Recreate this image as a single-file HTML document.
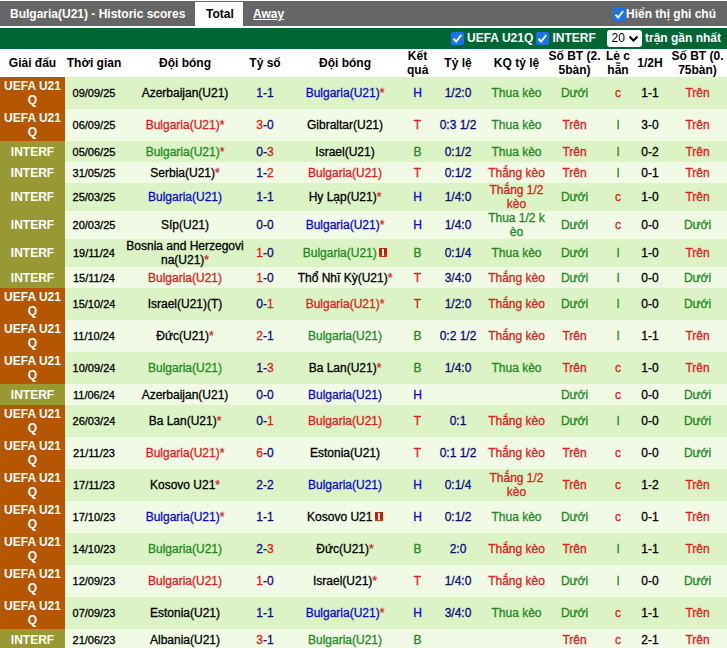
<!DOCTYPE html>
<html><head><meta charset="utf-8">
<style>
html,body{margin:0;padding:0;background:#fff;}
body{width:727px;height:648px;overflow:hidden;font-family:"Liberation Sans",Arial,sans-serif;font-size:12px;color:#000;position:relative;}
.top{position:absolute;left:0;top:1px;width:727px;height:25px;background:#666;}
.top .t{position:absolute;top:6px;color:#fff;font-weight:bold;font-size:12px;line-height:15px;white-space:nowrap;}
.top .tab{position:absolute;left:195px;top:1px;width:48px;height:26px;background:#fff;}
.cb{position:absolute;width:13px;height:13px;background:#1a73e8;border-radius:2px;}
.cb svg{position:absolute;left:0;top:0;}
.bar{position:absolute;left:0;top:28px;width:727px;height:21px;background:#006633;color:#fff;font-weight:bold;font-size:12px;line-height:15px;white-space:nowrap;}
.bar span{position:absolute;top:3px;}
.sel{position:absolute;left:607px;top:2px;width:35px;height:17px;background:#fff;border-radius:3px;color:#000;font-weight:normal;font-size:12px;line-height:17px;}
.sel span{top:0;}
table{position:absolute;left:0;top:49px;width:727px;border-collapse:collapse;table-layout:fixed;}
td,th{padding:0;text-align:center;line-height:14px;vertical-align:middle;white-space:normal;}
th{font-size:12px;font-weight:bold;line-height:14px;background:#fff;height:28px;}
th div{position:relative;top:0.4px;}
tr.a td{background:#dcf3c5;}
tr.b td{background:#f0fae5;}
td{-webkit-text-stroke:0.3px;}
td.lg{-webkit-text-stroke:0;color:#fff;font-weight:bold;font-size:12px;line-height:14px;}
tr td.lu{background:#b55700;}
tr td.li{background:#999933;}
.r{color:#e02020;}
.g{color:#1f8a1f;}
.bl{color:#0b0bc4;}
.k{color:#000;}
.dt{font-size:11px;}
.n{color:#0c0c7c;}
.sc{color:#0c0c7c;}
.od{color:#0c0c7c;}
.card{display:inline-block;width:8px;height:8.5px;background:linear-gradient(to bottom,#d02000,#c81800 50%,#e83808);margin-left:2.5px;position:relative;vertical-align:0.5px;}
.card b{position:absolute;left:3px;top:0.7px;width:2.2px;height:7.2px;background:#fff;}
</style></head><body>
<div class="top">
  <div class="t" style="left:10px">Bulgaria(U21) - Historic scores</div>
  <div class="tab"></div>
  <div class="t" style="left:206px;color:#000">Total</div>
  <div class="t" style="left:253px;text-decoration:underline">Away</div>
  <div class="cb" style="left:613px;top:7px"><svg width="13" height="13" viewBox="0 0 13 13"><path d="M2.5 6.7 L5.2 9.5 L10.2 3" fill="none" stroke="#fff" stroke-width="2"/></svg></div>
  <div class="t" style="left:626px">Hiển thị ghi chú</div>
</div>
<div class="bar">
  <div class="cb" style="left:451px;top:4px"><svg width="13" height="13" viewBox="0 0 13 13"><path d="M2.5 6.7 L5.2 9.5 L10.2 3" fill="none" stroke="#fff" stroke-width="2"/></svg></div>
  <span style="left:467px">UEFA U21Q</span>
  <div class="cb" style="left:536px;top:4px"><svg width="13" height="13" viewBox="0 0 13 13"><path d="M2.5 6.7 L5.2 9.5 L10.2 3" fill="none" stroke="#fff" stroke-width="2"/></svg></div>
  <span style="left:552.5px">INTERF</span>
  <div class="sel"><span style="left:4.5px">20</span><svg style="position:absolute;left:21px;top:5px" width="11" height="8" viewBox="0 0 11 8"><path d="M1.5 1.5 L5.5 5.5 L9.5 1.5" fill="none" stroke="#000" stroke-width="2"/></svg></div>
  <span style="left:645px">trận gần nhất</span>
</div>
<table>
<colgroup>
<col style="width:65px"><col style="width:58px"><col style="width:124px"><col style="width:36px"><col style="width:124px"><col style="width:21px"><col style="width:60px"><col style="width:57px"><col style="width:59px"><col style="width:28px"><col style="width:36px"><col style="width:59px">
</colgroup>
<tr><th><div>Giải đấu</div></th><th><div>Thời gian</div></th><th><div>Đội bóng</div></th><th><div>Tỷ số</div></th><th><div>Đội bóng</div></th><th><div>Kết quả</div></th><th><div>Tỷ lệ</div></th><th><div>KQ tỷ lệ</div></th><th><div>Số BT (2.<wbr>5bàn)</div></th><th><div>Lẻ c<wbr>hẵn</div></th><th><div>1/2H</div></th><th><div>Số BT (0.<wbr>75bàn)</div></th></tr>
<tr class="a" style="height:32px"><td class="lg lu">UEFA U21<wbr>Q</td><td class="dt">09/09/25</td><td><span class="k">Azerbaijan(U21)</span></td><td class="sc"><span class="n">1</span>-<span class="n">1</span></td><td><span class="bl">Bulgaria(U21)</span><span class="r">*</span></td><td class="bl">H</td><td class="od">1/2:0</td><td class="g">Thua kèo</td><td class="g">Dưới</td><td class="r">c</td><td>1-1</td><td class="r">Trên</td></tr>
<tr class="b" style="height:32px"><td class="lg lu">UEFA U21<wbr>Q</td><td class="dt">06/09/25</td><td><span class="r">Bulgaria(U21)</span><span class="r">*</span></td><td class="sc"><span class="r">3</span>-<span class="n">0</span></td><td><span class="k">Gibraltar(U21)</span></td><td class="r">T</td><td class="od">0:3 1/2</td><td class="g">Thua kèo</td><td class="r">Trên</td><td class="g">l</td><td>3-0</td><td class="r">Trên</td></tr>
<tr class="a" style="height:21px"><td class="lg li">INTERF</td><td class="dt">05/06/25</td><td><span class="g">Bulgaria(U21)</span><span class="r">*</span></td><td class="sc"><span class="n">0</span>-<span class="r">3</span></td><td><span class="k">Israel(U21)</span></td><td class="g">B</td><td class="od">0:1/2</td><td class="g">Thua kèo</td><td class="r">Trên</td><td class="g">l</td><td>0-2</td><td class="r">Trên</td></tr>
<tr class="b" style="height:21px"><td class="lg li">INTERF</td><td class="dt">31/05/25</td><td><span class="k">Serbia(U21)</span><span class="r">*</span></td><td class="sc"><span class="n">1</span>-<span class="r">2</span></td><td><span class="r">Bulgaria(U21)</span></td><td class="r">T</td><td class="od">0:1/2</td><td class="r">Thắng kèo</td><td class="r">Trên</td><td class="g">l</td><td>0-1</td><td class="r">Trên</td></tr>
<tr class="a" style="height:28px"><td class="lg li">INTERF</td><td class="dt">25/03/25</td><td><span class="bl">Bulgaria(U21)</span></td><td class="sc"><span class="n">1</span>-<span class="n">1</span></td><td><span class="k">Hy Lạp(U21)</span><span class="r">*</span></td><td class="bl">H</td><td class="od">1/4:0</td><td class="r">Thắng 1/2 kèo</td><td class="g">Dưới</td><td class="r">c</td><td>1-0</td><td class="r">Trên</td></tr>
<tr class="b" style="height:28px"><td class="lg li">INTERF</td><td class="dt">20/03/25</td><td><span class="k">Síp(U21)</span></td><td class="sc"><span class="n">0</span>-<span class="n">0</span></td><td><span class="bl">Bulgaria(U21)</span><span class="r">*</span></td><td class="bl">H</td><td class="od">1/4:0</td><td class="g">Thua 1/2 k<wbr>èo</td><td class="g">Dưới</td><td class="r">c</td><td>0-0</td><td class="g">Dưới</td></tr>
<tr class="a" style="height:28px"><td class="lg li">INTERF</td><td class="dt">19/11/24</td><td><span class="k">Bosnia and Herzegovi<wbr>na(U21)</span><span class="r">*</span></td><td class="sc"><span class="r">1</span>-<span class="n">0</span></td><td><span class="g">Bulgaria(U21)</span><i class="card"><b></b></i></td><td class="g">B</td><td class="od">0:1/4</td><td class="g">Thua kèo</td><td class="g">Dưới</td><td class="g">l</td><td>1-0</td><td class="r">Trên</td></tr>
<tr class="b" style="height:21px"><td class="lg li">INTERF</td><td class="dt">15/11/24</td><td><span class="r">Bulgaria(U21)</span></td><td class="sc"><span class="r">1</span>-<span class="n">0</span></td><td><span class="k">Thổ Nhĩ Kỳ(U21)</span><span class="r">*</span></td><td class="r">T</td><td class="od">3/4:0</td><td class="r">Thắng kèo</td><td class="g">Dưới</td><td class="g">l</td><td>0-0</td><td class="g">Dưới</td></tr>
<tr class="a" style="height:32px"><td class="lg lu">UEFA U21<wbr>Q</td><td class="dt">15/10/24</td><td><span class="k">Israel(U21)(T)</span></td><td class="sc"><span class="n">0</span>-<span class="r">1</span></td><td><span class="r">Bulgaria(U21)</span><span class="r">*</span></td><td class="r">T</td><td class="od">1/2:0</td><td class="r">Thắng kèo</td><td class="g">Dưới</td><td class="g">l</td><td>0-0</td><td class="g">Dưới</td></tr>
<tr class="b" style="height:32px"><td class="lg lu">UEFA U21<wbr>Q</td><td class="dt">11/10/24</td><td><span class="k">Đức(U21)</span><span class="r">*</span></td><td class="sc"><span class="r">2</span>-<span class="n">1</span></td><td><span class="g">Bulgaria(U21)</span></td><td class="g">B</td><td class="od">0:2 1/2</td><td class="r">Thắng kèo</td><td class="r">Trên</td><td class="g">l</td><td>1-1</td><td class="r">Trên</td></tr>
<tr class="a" style="height:32px"><td class="lg lu">UEFA U21<wbr>Q</td><td class="dt">10/09/24</td><td><span class="g">Bulgaria(U21)</span></td><td class="sc"><span class="n">1</span>-<span class="r">3</span></td><td><span class="k">Ba Lan(U21)</span><span class="r">*</span></td><td class="g">B</td><td class="od">1/4:0</td><td class="g">Thua kèo</td><td class="r">Trên</td><td class="r">c</td><td>1-0</td><td class="r">Trên</td></tr>
<tr class="b" style="height:21px"><td class="lg li">INTERF</td><td class="dt">11/06/24</td><td><span class="k">Azerbaijan(U21)</span></td><td class="sc"><span class="n">0</span>-<span class="n">0</span></td><td><span class="bl">Bulgaria(U21)</span></td><td class="bl">H</td><td class="od"></td><td class="g"></td><td class="g">Dưới</td><td class="r">c</td><td>0-0</td><td class="g">Dưới</td></tr>
<tr class="a" style="height:32px"><td class="lg lu">UEFA U21<wbr>Q</td><td class="dt">26/03/24</td><td><span class="k">Ba Lan(U21)</span><span class="r">*</span></td><td class="sc"><span class="n">0</span>-<span class="r">1</span></td><td><span class="r">Bulgaria(U21)</span></td><td class="r">T</td><td class="od">0:1</td><td class="r">Thắng kèo</td><td class="g">Dưới</td><td class="g">l</td><td>0-0</td><td class="g">Dưới</td></tr>
<tr class="b" style="height:32px"><td class="lg lu">UEFA U21<wbr>Q</td><td class="dt">21/11/23</td><td><span class="r">Bulgaria(U21)</span><span class="r">*</span></td><td class="sc"><span class="r">6</span>-<span class="n">0</span></td><td><span class="k">Estonia(U21)</span></td><td class="r">T</td><td class="od">0:1 1/2</td><td class="r">Thắng kèo</td><td class="r">Trên</td><td class="r">c</td><td>0-0</td><td class="g">Dưới</td></tr>
<tr class="a" style="height:32px"><td class="lg lu">UEFA U21<wbr>Q</td><td class="dt">17/11/23</td><td><span class="k">Kosovo U21</span><span class="r">*</span></td><td class="sc"><span class="n">2</span>-<span class="n">2</span></td><td><span class="bl">Bulgaria(U21)</span></td><td class="bl">H</td><td class="od">0:1/4</td><td class="r">Thắng 1/2 kèo</td><td class="r">Trên</td><td class="r">c</td><td>1-2</td><td class="r">Trên</td></tr>
<tr class="b" style="height:32px"><td class="lg lu">UEFA U21<wbr>Q</td><td class="dt">17/10/23</td><td><span class="bl">Bulgaria(U21)</span><span class="r">*</span></td><td class="sc"><span class="n">1</span>-<span class="n">1</span></td><td><span class="k">Kosovo U21</span><i class="card"><b></b></i></td><td class="bl">H</td><td class="od">0:1/2</td><td class="g">Thua kèo</td><td class="g">Dưới</td><td class="r">c</td><td>0-1</td><td class="r">Trên</td></tr>
<tr class="a" style="height:32px"><td class="lg lu">UEFA U21<wbr>Q</td><td class="dt">14/10/23</td><td><span class="g">Bulgaria(U21)</span></td><td class="sc"><span class="n">2</span>-<span class="r">3</span></td><td><span class="k">Đức(U21)</span><span class="r">*</span></td><td class="g">B</td><td class="od">2:0</td><td class="r">Thắng kèo</td><td class="r">Trên</td><td class="g">l</td><td>1-1</td><td class="r">Trên</td></tr>
<tr class="b" style="height:32px"><td class="lg lu">UEFA U21<wbr>Q</td><td class="dt">12/09/23</td><td><span class="r">Bulgaria(U21)</span></td><td class="sc"><span class="r">1</span>-<span class="n">0</span></td><td><span class="k">Israel(U21)</span><span class="r">*</span></td><td class="r">T</td><td class="od">1/4:0</td><td class="r">Thắng kèo</td><td class="g">Dưới</td><td class="g">l</td><td>0-0</td><td class="g">Dưới</td></tr>
<tr class="a" style="height:32px"><td class="lg lu">UEFA U21<wbr>Q</td><td class="dt">07/09/23</td><td><span class="k">Estonia(U21)</span></td><td class="sc"><span class="n">1</span>-<span class="n">1</span></td><td><span class="bl">Bulgaria(U21)</span><span class="r">*</span></td><td class="bl">H</td><td class="od">3/4:0</td><td class="g">Thua kèo</td><td class="g">Dưới</td><td class="r">c</td><td>1-1</td><td class="r">Trên</td></tr>
<tr class="b" style="height:21px"><td class="lg li">INTERF</td><td class="dt">21/06/23</td><td><span class="k">Albania(U21)</span></td><td class="sc"><span class="r">3</span>-<span class="n">1</span></td><td><span class="g">Bulgaria(U21)</span></td><td class="g">B</td><td class="od"></td><td class="g"></td><td class="r">Trên</td><td class="r">c</td><td>2-1</td><td class="r">Trên</td></tr>
</table>
</body></html>
